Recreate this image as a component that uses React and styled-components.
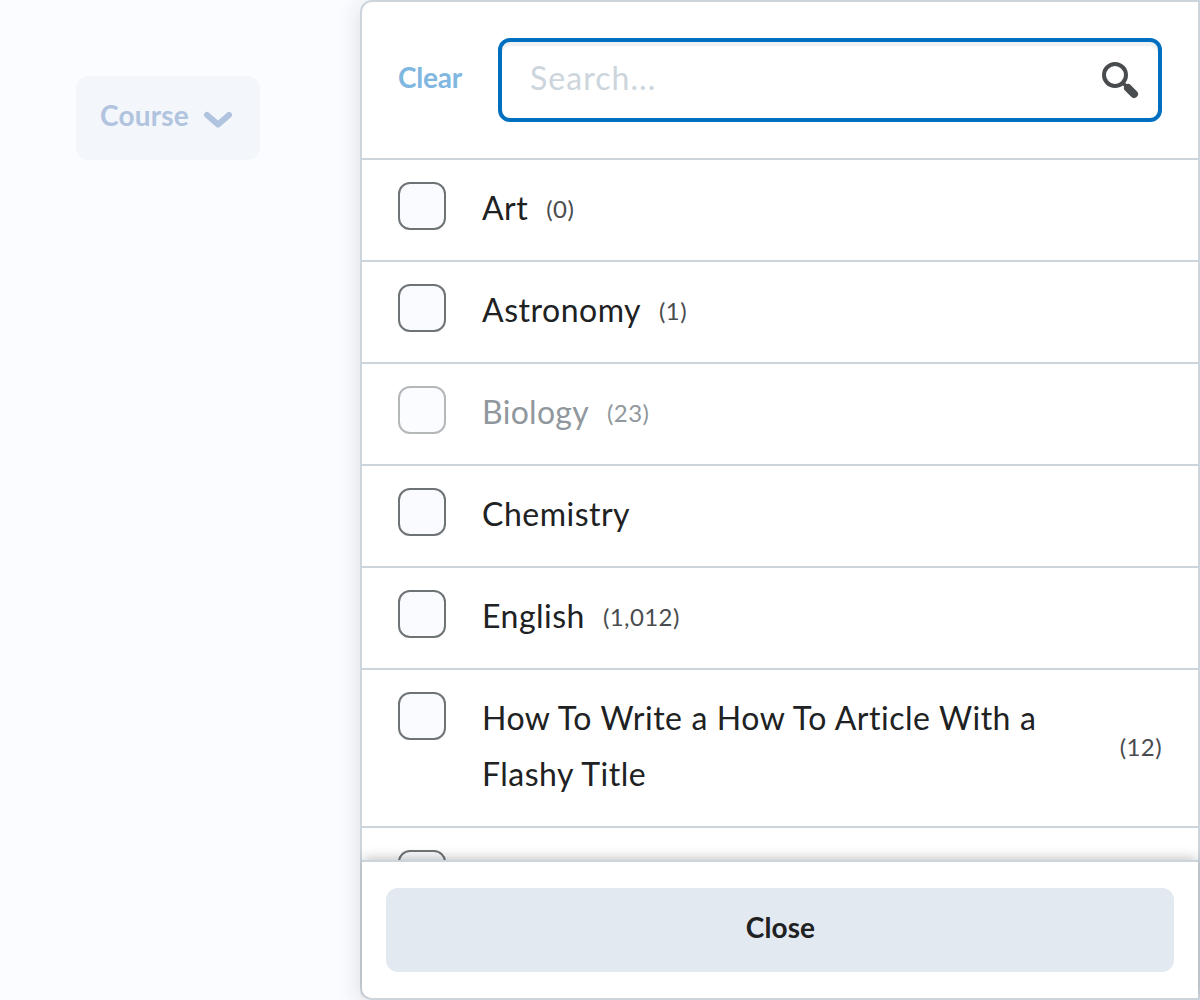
import React from "react";
import styled, { createGlobalStyle } from "styled-components";

const GlobalStyle = createGlobalStyle`
  *, *::before, *::after { box-sizing: border-box; }
  body {
    margin: 0;
    background: #fbfcff;
    color: #202122;
    font-family: Lato, "Liberation Sans", sans-serif;
    overflow: hidden;
  }
`;

const Page = styled.main`
  display: flex;
  width: 1200px;
  height: 1000px;
  overflow: hidden;
`;

const Sidebar = styled.aside`
  flex: none;
  width: 360px;
  padding: 76px 0 0 76px;
`;

const Opener = styled.button`
  display: flex;
  align-items: center;
  width: 184px;
  height: 84px;
  padding: 0 24px;
  gap: 14px;
  border: 0;
  border-radius: 12px;
  background: #f3f6fa;
  color: #b0c4df;
  font: 700 28px/40px Lato, sans-serif;
  letter-spacing: 0.2px;
`;

const OpenerLabel = styled.span`
  padding-bottom: 6px;
`;

const Chevron = styled.svg`
  flex: none;
  width: 30px;
  height: 20px;
  margin-top: 3px;
`;

const Panel = styled.section`
  flex: none;
  display: flex;
  flex-direction: column;
  width: 840px;
  height: 1000px;
  border: 2px solid #cdd5dc;
  border-radius: 12px 0 0 12px;
  background: #ffffff;
  box-shadow: 0 4px 24px rgba(32, 33, 34, 0.15);
`;

const Header = styled.header`
  flex: none;
  display: flex;
  align-items: center;
  gap: 36px;
  height: 158px;
  padding: 0 36px;
  border-bottom: 2px solid #cdd5dc;
`;

const Clear = styled.button`
  flex: none;
  width: 64px;
  padding: 0 0 6px;
  border: 0;
  background: none;
  color: #80b7e0;
  font: 700 28px/40px Lato, sans-serif;
  letter-spacing: -0.2px;
  text-align: left;
`;

const SearchBox = styled.label`
  flex: 1;
  display: flex;
  align-items: center;
  height: 84px;
  padding: 0 18px 0 28px;
  border: 4px solid #006fbf;
  border-radius: 12px;
  box-shadow: inset 0 4px 0 #eff1f3;
`;

const SearchInput = styled.input`
  flex: 1;
  min-width: 0;
  height: 50px;
  padding: 0 0 5px;
  border: 0;
  outline: 0;
  background: none;
  font: 400 32px/44px Lato, sans-serif;
  letter-spacing: 1.05px;
  &::placeholder { color: #cdd5dc; opacity: 1; }
`;

const SearchIcon = styled.svg`
  flex: none;
  width: 40px;
  height: 40px;
`;

const List = styled.ul`
  flex: 1;
  min-height: 0;
  overflow: hidden;
  margin: 0;
  padding: 0;
  list-style: none;
`;

const Row = styled.li`
  display: flex;
  align-items: flex-start;
  padding: 20px 36px 24px;
  border-bottom: 2px solid #cdd5dc;
`;

const Box = styled.span`
  flex: none;
  width: 48px;
  height: 48px;
  margin: 2px 36px 0 0;
  border: 2px solid #6e7376;
  border-radius: 12px;
  background: #f9fbff;
  opacity: ${(p) => (p.$disabled ? 0.5 : 1)};
`;

const Name = styled.span`
  min-width: 0;
  font-size: 32px;
  line-height: 56px;
  letter-spacing: ${(p) => (p.$disabled ? "0.3px" : "0.5px")};
  word-spacing: 0.3px;
  color: ${(p) => (p.$disabled ? "#90989d" : "#202122")};
`;

const Count = styled.span`
  flex: none;
  align-self: center;
  padding: 2px 0 0 18px;
  font-size: 24px;
  line-height: 36px;
  letter-spacing: 0.4px;
  color: ${(p) => (p.$disabled ? "#90989d" : "#494c4e")};
`;

const Footer = styled.footer`
  flex: none;
  z-index: 1;
  height: 138px;
  padding: 26px 24px 0;
  border-top: 2px solid #cdd5dc;
  border-bottom-left-radius: 10px;
  background: #ffffff;
  box-shadow: 0 -3px 12px -1px rgba(32, 33, 34, 0.27);
  clip-path: inset(-16px -2px 0 -2px);
`;

const CloseButton = styled.button`
  width: 100%;
  height: 84px;
  padding: 0 0 6px 1px;
  border: 0;
  border-radius: 12px;
  background: #e3e9f1;
  color: #202122;
  font: 700 28px/40px Lato, sans-serif;
  letter-spacing: 0.1px;
`;

const courses = [
  { name: "Art", count: "0" },
  { name: "Astronomy", count: "1" },
  { name: "Biology", count: "23", disabled: true },
  { name: "Chemistry" },
  { name: "English", count: "1,012" },
  { name: "How To Write a How To Article With a Flashy Title", count: "12" },
  { name: "" },
];

export default function App() {
  return (
    <Page>
      <GlobalStyle />
      <Sidebar>
        <Opener>
          <OpenerLabel>Course</OpenerLabel>
          <Chevron viewBox="0 0 30 20">
            <path d="M4 5 L15 14.5 L26 5" fill="none" stroke="#b0c4df" strokeWidth="6" strokeLinecap="round" strokeLinejoin="round" />
          </Chevron>
        </Opener>
      </Sidebar>
      <Panel>
        <Header>
          <Clear>Clear</Clear>
          <SearchBox>
            <SearchInput placeholder="Search..." />
            <SearchIcon viewBox="0 0 40 40" fill="none" stroke="#494c4e">
              <circle cx="15" cy="15" r="11" strokeWidth="4" />
              <path d="M22.5 22.5 L27 27" strokeWidth="3.5" />
              <path d="M28 28 L34 34" strokeWidth="8" strokeLinecap="round" />
            </SearchIcon>
          </SearchBox>
        </Header>
        <List>
          {courses.map(({ name, count, disabled }) => (
            <Row key={name}>
              <Box $disabled={disabled} />
              <Name $disabled={disabled}>{name}</Name>
              {count && <Count $disabled={disabled}>({count})</Count>}
            </Row>
          ))}
        </List>
        <Footer>
          <CloseButton>Close</CloseButton>
        </Footer>
      </Panel>
    </Page>
  );
}
